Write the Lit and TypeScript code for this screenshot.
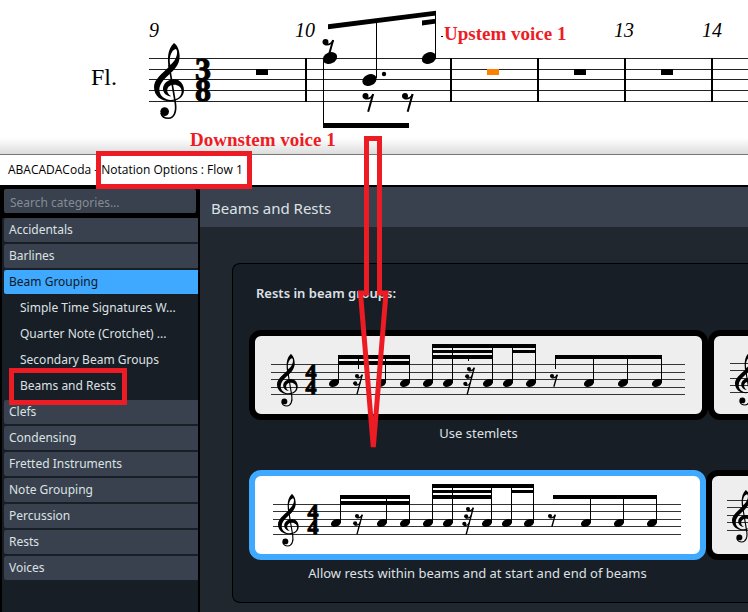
import { LitElement, html, svg, css } from "lit";
import { customElement, property, state } from "lit/decorators.js";

/* ---- music symbols, shared by the score and the option pictures ---- */

const clef = (x: number, y: number, s: number) => svg`
  <g transform="translate(${x} ${y}) scale(${s})">
    <path fill="currentColor" fill-rule="evenodd" d="M44 73C40 50 40 18 60 0C70 6 77 22 77 40C77 66 60 82 44 96C28 110 16 125 16 140C16 160 34 171 50 171C70 171 83 161 83 145C83 132 72 125 60 125C46 125 38 134 40 146C42 154 47 158 52 160C38 160 27 150 27 138C27 122 42 109 60 109C78 109 90 124 90 142C90 162 72 175 48 175C20 175 0 158 0 132C0 110 24 92 44 73ZM49 66C44 46 51 22 65 18C74 22 70 50 49 66Z"/>
    <path fill="none" stroke="currentColor" stroke-width="5" d="M45 66L64 180C68 205 61 226 43 226C33 226 24 222 21 210"/>
    <circle fill="currentColor" cx="32" cy="206" r="13"/>
  </g>`;

const rest = (x: number, y: number, s: number, hooks: number) => svg`
  <g transform="translate(${x} ${y}) scale(${s})" fill="none" stroke="currentColor">
    ${Array.from({ length: hooks }, (_, i) => svg`
      <g transform="translate(${-8 * i} ${32 * i})">
        <circle fill="currentColor" stroke="none" cx="0" cy="0" r="9"/>
        <path stroke-width="5" d="M-2 7C9 10 17 6 23 -5"/>
      </g>`)}
    <path stroke-width="6" d="M23 -6L${8 - 8 * (hooks - 1)} ${47 + 32 * (hooks - 1)}"/>
  </g>`;

const note = (x: number, y: number, rx: number, ry: number) => svg`
  <ellipse fill="currentColor" rx=${rx} ry=${ry} transform="translate(${x} ${y}) rotate(-25)"/>`;

const box = (x: number, y: number, w: number, h: number) => svg`
  <rect fill="currentColor" x=${x} y=${y} width=${w} height=${h}/>`;

interface Picture {
  lines: number[];
  start: number;
  end: number;
  clefX: number;
  clefY: number;
  meterX?: number;
  noteY?: number;
  notes?: number[];
  rests?: [number, number, number][];
  lastBeam?: number;
  stemlets?: [number, number][];
}

interface Option {
  label: string;
  picture: Picture;
}

const rows: Option[][] = [
  [
    {
      label: "Use stemlets",
      picture: {
        lines: [28, 36, 43, 51, 58], start: 16, end: 430, clefX: 22, clefY: 18,
        meterX: 56, noteY: 47,
        notes: [79, 126, 150, 173, 193, 233, 253, 276, 334, 368, 402],
        rests: [[102, 40, 2], [214, 33, 3], [297, 40, 1]],
        lastBeam: 300,
        stemlets: [[103, 33], [213, 25], [300, 33]],
      },
    },
    {
      label: "",
      picture: { lines: [27, 34, 42, 49, 56], start: 16, end: 430, clefX: 21, clefY: 17 },
    },
  ],
  [
    {
      label: "Allow rests within beams and at start and end of beams",
      picture: {
        lines: [28, 35, 43, 50, 58], start: 18, end: 426, clefX: 23, clefY: 18,
        meterX: 58, noteY: 47,
        notes: [81, 127, 150, 173, 193, 232, 252, 274, 331, 364, 397],
        rests: [[102, 40, 2], [213, 33, 3], [295, 40, 1]],
        lastBeam: 298,
      },
    },
    {
      label: "",
      picture: { lines: [24, 31, 39, 46, 54], start: 15, end: 426, clefX: 20, clefY: 14 },
    },
  ],
];

@customElement("option-picture")
class OptionPicture extends LitElement {
  @property({ attribute: false }) picture!: Picture;

  static styles = css`
    :host { display: block; color: #000; }
    svg { display: block; width: 100%; height: 78px; }
    .meter { font: bold 22px "Liberation Serif", serif; fill: currentColor; stroke: currentColor; stroke-width: 1; text-anchor: middle; }
    .staff { stroke: #333; stroke-width: 1; }
  `;

  render() {
    const p = this.picture;
    const beamTop = (i: number) => (i > 2 && i < 8 ? 8 : 19);
    const stem = (i: number) => p.notes![i] + 4;
    return html`<svg aria-hidden="true">
      ${p.lines.map((y) => svg`<line class="staff" x1=${p.start} x2=${p.end} y1=${y + 0.5} y2=${y + 0.5}/>`)}
      ${clef(p.clefX, p.clefY, 0.23)}
      ${p.meterX ? svg`<text class="meter" y="43"><tspan x=${p.meterX}>4</tspan><tspan x=${p.meterX} dy="15">4</tspan></text>` : ""}
      ${p.notes ? svg`
        ${p.notes.map((x, i) => svg`${note(x, p.noteY!, 5.3, 3.7)}${box(stem(i), beamTop(i), 1, p.noteY! - beamTop(i))}`)}
        ${box(stem(0), 19, stem(2) - stem(0) + 1, 4)}
        ${box(stem(0), 25, stem(2) - stem(0) + 1, 4)}
        ${box(stem(3), 8, stem(7) - stem(3) + 1, 4)}
        ${box(stem(3), 14, stem(5) - stem(3) + 1, 3)}
        ${box(stem(3), 19, stem(5) - stem(3) + 1, 4)}
        ${box(stem(6), 14, stem(7) - stem(6) + 1, 3)}
        ${box(p.lastBeam!, 19, stem(10) - p.lastBeam! + 1, 4)}` : ""}
      ${(p.rests ?? []).map(([x, y, n]) => rest(x, y, 0.23, n))}
      ${(p.stemlets ?? []).map(([x, y]) => box(x, 19, 1, y - 19))}
    </svg>`;
  }
}

@customElement("flute-score")
class FluteScore extends LitElement {
  static styles = css`
    :host { display: block; height: 154px; color: #000; background: linear-gradient(#fff 0 138px, #dcdcdc 154px); }
    svg { display: block; width: 100%; height: 154px; }
    text { fill: currentColor; font-family: "Liberation Serif", serif; }
    .name { font-size: 24px; }
    .bar { font-size: 20px; font-style: italic; }
    .meter { font-size: 32px; font-weight: bold; text-anchor: middle; stroke: currentColor; stroke-width: 1; }
    .remark { font-size: 19px; font-weight: bold; fill: #ed1c24; }
    .staff { stroke: #222; stroke-width: 1; }
    .selected { color: #ff8000; }
  `;

  render() {
    return html`<svg role="img" aria-label="Flute, bars 9 to 14">
      ${[58, 69, 79, 90, 101].map((y) => svg`<line class="staff" x1="149" x2="100%" y1=${y + 0.5} y2=${y + 0.5}/>`)}
      ${[305, 450, 537, 624, 711].map((x) => box(x, 58, 2, 44))}
      <text class="name" x="91" y="85">Fl.</text>
      ${[["9", 149], ["10", 295], ["13", 614], ["14", 702]].map(([t, x]) => svg`<text class="bar" x=${x} y="37">${t}</text>`)}
      ${clef(154, 43, 0.333)}
      <text class="meter" y="80"><tspan x="203">3</tspan><tspan x="203" dy="21">8</tspan></text>
      ${[256, 574, 661].map((x) => box(x, 69, 12, 6))}
      <g class="selected">${box(487, 69, 12, 6)}</g>
      ${note(330, 58, 7.4, 5.6)}${note(369.5, 80, 7.4, 5.6)}${note(429, 58, 7.4, 5.6)}
      <circle cx="384" cy="74" r="2.2"/>
      ${box(323, 58, 1, 68)}${box(376, 20, 1, 58)}${box(435, 11, 1, 47)}
      <path d="M328 24.3L436 10.7V15.6L328 29.2ZM422 20.5L436 18.7V23.6L422 25.4Z"/>
      ${box(323, 123, 86, 5)}
      ${rest(325.5, 42, 0.333, 1)}${rest(365.5, 96, 0.333, 1)}${rest(405, 96, 0.333, 1)}
      ${box(441, 36, 2, 1)}
      <text class="remark" x="444" y="40">Upstem voice 1</text>
      <text class="remark" x="190" y="146">Downstem voice 1</text>
    </svg>`;
  }
}

const categories = [
  { name: "Accidentals" },
  { name: "Barlines" },
  {
    name: "Beam Grouping",
    pages: ["Simple Time Signatures W...", "Quarter Note (Crotchet) ...", "Secondary Beam Groups", "Beams and Rests"],
  },
  { name: "Clefs" },
  { name: "Condensing" },
  { name: "Fretted Instruments" },
  { name: "Note Grouping" },
  { name: "Percussion" },
  { name: "Rests" },
  { name: "Voices" },
];

@customElement("app-root")
class AppRoot extends LitElement {
  @state() private category = "Beam Grouping";
  @state() private choice = rows[1][0];

  static styles = css`
    :host {
      display: flex; flex-direction: column; position: relative;
      min-height: 100vh; overflow: hidden;
      font: 13px/18px "Noto Sans", "Open Sans", sans-serif;
      color: #dde1e5; background: #fff;
    }
    * { box-sizing: border-box; }
    button { font: inherit; color: inherit; border: 0; margin: 0; padding: 0; background: none; text-align: left; cursor: pointer; }
    .title { height: 31px; padding: 0 8px; border-top: 1px solid #777; background: #fff; color: #000; font-family: "Open Sans", "Noto Sans", sans-serif; font-size: 12px; line-height: 30px; }
    .window { flex: 1; display: flex; background: #000; border-top: 2px solid #000; }
    .side { flex: none; width: 200px; display: flex; flex-direction: column; padding: 2px 2px 0 2px; font-size: 12px; }
    .search { width: 192px; height: 24px; margin: 0 2px 5px; padding: 2px 6px 0; border: 0; border-radius: 2px; background: #38414d; color: #dde1e5; font: inherit; outline: 0; }
    .search::placeholder { color: #858c95; opacity: 1; }
    .list { flex: 1; display: flex; flex-direction: column; gap: 2px; padding: 0 0 0 2px; background: #181e25; }
    .item { height: 24px; padding: 0 5px; border-radius: 2px 0 0 2px; background: #38414d; white-space: nowrap; }
    .item.open { background: #3fa9ff; color: #10181f; }
    .page { height: 24px; padding: 0 16px; white-space: nowrap; }
    .main { flex: 1; min-width: 0; display: flex; flex-direction: column; background: #21272f; }
    .heading { margin: 0; height: 40px; padding: 0 11px; background: #38414d; font-size: 15px; font-weight: 400; line-height: 42px; }
    .card { height: 340px; margin: 36px 0 0 32px; padding: 20px 0 0 16px; border: 1px solid #000; border-right: 0; border-radius: 8px 0 0 8px; background: #181e25; overflow: hidden; }
    .question { margin: 0 0 28px; padding: 0 7px; font-size: 13px; font-weight: 600; line-height: 18px; }
    .row { display: flex; height: 140px; }
    .option { flex: none; width: 459px; display: flex; flex-direction: column; align-items: stretch; gap: 4px; }
    .row + .row .option { width: 457px; }
    .frame { display: block; height: 90px; border: 6px solid #000; border-radius: 12px; background: #eee; overflow: hidden; }
    .option.chosen .frame { border-color: #3fa9ff; background: #fff; }
    .caption { text-align: center; }
    .marks { position: absolute; inset: 0; width: 100%; height: 100%; pointer-events: none; fill: none; stroke: #ed1c24; stroke-width: 5; }
  `;

  render() {
    return html`
      <flute-score></flute-score>
      <div class="title">ABACADACoda - Notation Options : Flow 1</div>
      <div class="window">
        <nav class="side">
          <input class="search" type="search" aria-label="Search categories" placeholder="Search categories..." />
          <div class="list">
            ${categories.map((c) => html`
              <button class="item ${c.name === this.category ? "open" : ""}" @click=${() => (this.category = c.name)}>${c.name}</button>
              ${c.name === this.category ? (c.pages ?? []).map((p) => html`<button class="page">${p}</button>`) : ""}
            `)}
          </div>
        </nav>
        <main class="main">
          <h1 class="heading">Beams and Rests</h1>
          <section class="card">
            <h2 class="question">Rests in beam groups:</h2>
            ${rows.map((row) => html`<div class="row">
              ${row.map((o) => html`
                <button class="option ${o === this.choice ? "chosen" : ""}" aria-pressed=${o === this.choice} @click=${() => (this.choice = o)}>
                  <span class="frame"><option-picture .picture=${o.picture}></option-picture></span>
                  <span class="caption">${o.label}</span>
                </button>`)}
            </div>`)}
          </section>
        </main>
      </div>
      <svg class="marks" aria-hidden="true">
        <rect x="98.5" y="153.5" width="151" height="33"/>
        <rect x="11.5" y="370.5" width="113" height="32"/>
        <path stroke-miterlimit="3" d="M366.5 138.5H379.5V293H386L373.3 447L360.5 293H366.5Z"/>
      </svg>`;
  }
}
